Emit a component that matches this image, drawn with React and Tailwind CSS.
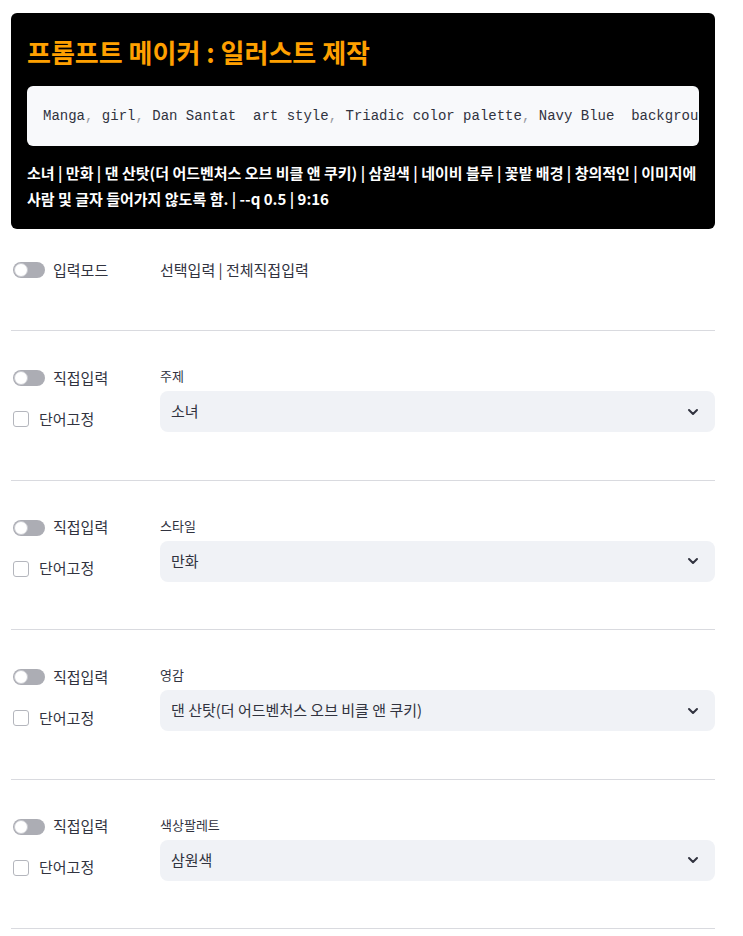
const font = { fontFamily: '"Noto Sans CJK KR", "Noto Sans", sans-serif' };

const Toggle = () => (
  <div className="relative w-[32px] h-[16px] rounded-full bg-[#acadb4]">
    <div className="absolute left-[1px] top-[1px] w-[14px] h-[14px] rounded-full bg-white border border-[#c9cad0]"></div>
  </div>
);

const Chevron = () => (
  <svg className="w-[16px] h-[16px] text-[#31333f]" viewBox="0 0 24 24" fill="none" stroke="currentColor" strokeWidth={3} strokeLinecap="round" strokeLinejoin="round">
    <path d="M6 9l6 6 6-6" />
  </svg>
);

const sections = [
  { label: '주제', value: '소녀' },
  { label: '스타일', value: '만화' },
  { label: '영감', value: '댄 산탓(더 어드벤처스 오브 비클 앤 쿠키)' },
  { label: '색상팔레트', value: '삼원색' },
];

const Section = ({ label, value }) => (
  <div className="pt-[35px] pb-[47.5px] border-b border-[#d9dadf] flex">
    <div className="w-[149px] pl-[2px] flex flex-col gap-[17px]">
      <div className="h-[24px] flex items-center gap-[8px]">
        <Toggle />
        <span className="text-[15px] text-[#31333f]">직접입력</span>
      </div>
      <div className="h-[24px] flex items-center gap-[10px]">
        <div className="w-[16px] h-[16px] rounded-[3px] border border-[#b4b6bd] bg-white"></div>
        <span className="text-[15px] text-[#31333f]">단어고정</span>
      </div>
    </div>
    <div className="flex-1">
      <div className="h-[19px] mb-[6px] text-[13px] leading-[19px] text-[#31333f]">{label}</div>
      <div className="h-[41px] rounded-[8px] bg-[#f0f2f6] flex items-center justify-between pl-[11px] pr-[14px]">
        <span className="text-[15px] text-[#31333f]">{value}</span>
        <Chevron />
      </div>
    </div>
  </div>
);

const C = () => <span className="text-[#9a9ca3]">,</span>;

export default function App() {
  return (
    <div className="min-h-screen bg-white pt-[13px] px-[11px]" style={font}>
      <div className="w-[704px]">
        <div className="bg-black rounded-[6px] px-[16px] pt-[22px] pb-[17px]">
          <h1 className="text-[26px] leading-[34px] font-bold text-[#ffa000]">프롬프트 메이커 : 일러스트 제작</h1>
          <div className="mt-[17px] h-[60px] rounded-[6px] bg-[#f8f9fb] flex items-center pl-[16px] overflow-hidden">
            <pre className="text-[14px] text-[#31333f] whitespace-pre overflow-hidden" style={{ fontFamily: '"Liberation Mono", "DejaVu Sans Mono", monospace' }}>
              Manga<C /> girl<C /> Dan Santat  art style<C /> Triadic color palette<C /> Navy Blue  backgrou
            </pre>
          </div>
          <p className="mt-[14px] text-[15px] leading-[26px] font-bold text-white">
            소녀 | 만화 | 댄 산탓(더 어드벤처스 오브 비클 앤 쿠키) | 삼원색 | 네이비 블루 | 꽃밭 배경 | 창의적인 | 이미지에 사람 및 글자 들어가지 않도록 함. | --q 0.5 | 9:16
          </p>
        </div>

        <div className="pt-[29px] pb-[48px] border-b border-[#d9dadf] flex">
          <div className="w-[149px] pl-[2px] h-[24px] flex items-center gap-[8px]">
            <Toggle />
            <span className="text-[15px] text-[#31333f]">입력모드</span>
          </div>
          <div className="h-[24px] flex items-center text-[15px] text-[#31333f]">선택입력 | 전체직접입력</div>
        </div>

        {sections.map((s) => (
          <Section key={s.label} {...s} />
        ))}
      </div>
    </div>
  );
}
